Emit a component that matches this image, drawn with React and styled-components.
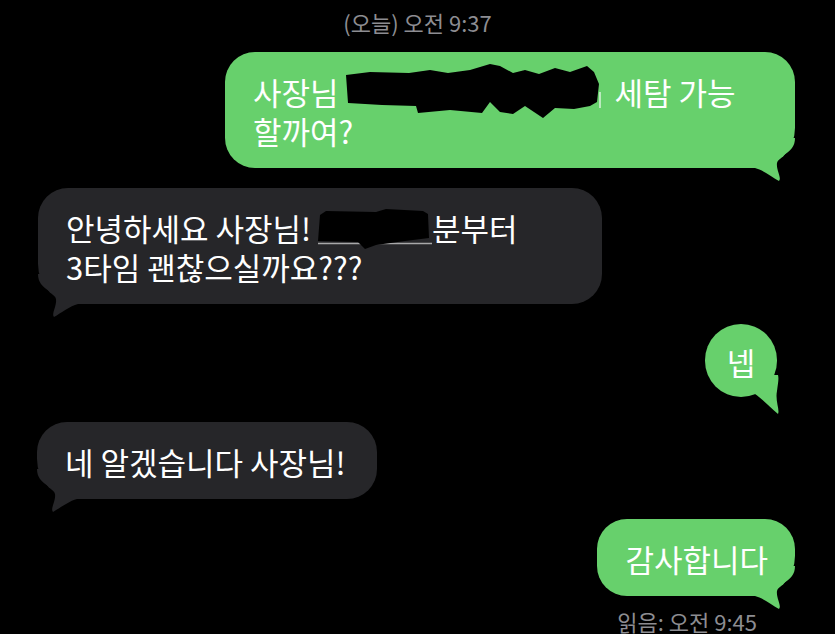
import React from "react";
import styled, { createGlobalStyle } from "styled-components";

const GREEN = "#67d06c";
const GRAY = "#262629";

const GlobalStyle = createGlobalStyle`
  html, body {
    margin: 0;
    padding: 0;
    background: #000;
  }
  body {
    width: 835px;
    height: 634px;
    overflow: hidden;
    font-family: "Noto Sans CJK KR", "Noto Sans", sans-serif;
  }
`;

const Thread = styled.div`
  display: flex;
  flex-direction: column;
  padding-top: 8px;
`;

const Stamp = styled.div`
  text-align: center;
  font-size: 22px;
  line-height: 28px;
  color: #8d8d92;
`;

const Row = styled.div`
  display: flex;
  justify-content: ${(p) => (p.$side === "right" ? "flex-end" : "flex-start")};
  padding: ${(p) => (p.$side === "right" ? `0 ${p.$inset}px 0 0` : `0 0 0 ${p.$inset}px`)};
  margin-top: ${(p) => p.$gap}px;
`;

const Bubble = styled.div`
  position: relative;
  box-sizing: border-box;
  width: ${(p) => (p.$w ? `${p.$w}px` : "auto")};
  padding: 20px 27px 18px 28px;
  border-radius: 30px;
  ${(p) => (p.$side === "right" ? "border-bottom-right-radius: 40px;" : "border-bottom-left-radius: 40px;")}
  background: ${(p) => (p.$side === "right" ? GREEN : GRAY)};
  color: #fff;
  font-size: 31px;
  line-height: 39px;
  white-space: nowrap;
`;

const Dot = styled(Bubble)`
  width: 72px;
  height: 73px;
  padding: 18px 0 16px;
  border-radius: 36px;
  text-align: center;
`;

const Text = styled.span`
  position: relative;
`;

const Tail = styled.svg`
  position: absolute;
  bottom: ${(p) => p.$drop}px;
  ${(p) => (p.$side === "right" ? `right: ${p.$edge}px;` : `left: ${p.$edge}px; transform: scaleX(-1);`)}
  fill: ${(p) => (p.$side === "right" ? GREEN : GRAY)};
  overflow: visible;
`;

const Redact = styled.span`
  display: inline-block;
  vertical-align: top;
  width: ${(p) => p.$w}px;
  height: 39px;

  svg {
    display: block;
    overflow: visible;
  }
`;

const Receipt = styled.div`
  text-align: right;
  padding-right: 78px;
  margin-top: 12px;
  font-size: 22px;
  line-height: 26px;
  color: #8d8d92;
`;

const TAIL = "M0 0 L0 30 C8 32 17 39 24 43 C27 40 21 32 22 25 C23 19 33 16 37 10 C39 7 40 4 40 0 Z";
const SMALL_TAIL = "M4 0 L4 19 C9 22 19 32 27 39 C29 35 24 26 26 16 C27 8 28 4 27 0 Z";

const BubbleTail = ({ side }) => (
  <Tail $side={side} $edge={0} $drop={-14} width="40" height="44" viewBox="0 0 40 44">
    <path d={TAIL} />
  </Tail>
);

const ScribbleLong = () => (
  <Redact $w={262}>
    <svg width="262" height="39" viewBox="0 0 262 39">
      <line x1="82" y1="37" x2="112" y2="37" stroke="rgba(255,255,255,0.75)" strokeWidth="1.5" />
      <line x1="254" y1="20" x2="254" y2="36" stroke="rgba(255,255,255,0.75)" strokeWidth="1.5" />
      <polygon
        fill="#000"
        points="0,3 2,31 36,33 70,34 72,41 104,38 136,41 144,30 154,40 167,42 179,34 197,46 209,36 228,37 244,34 251,30 253,12 248,0 241,-6 224,0 209,-4 193,2 179,-2 167,1 154,-6 144,-8 124,-2 102,1 84,-2 63,1 24,0"
      />
    </svg>
  </Redact>
);

const ScribbleShort = () => (
  <Redact $w={114}>
    <svg width="114" height="39" viewBox="0 0 114 39">
      <line x1="0" y1="35.5" x2="114" y2="35.5" stroke="rgba(255,255,255,0.6)" strokeWidth="1.5" />
      <polygon fill="#000" points="2,7 8,3 58,4 68,1 105,3 110,6 111,30 87,33 58,37 47,41 40,34 0,33" />
    </svg>
  </Redact>
);

export default function App() {
  return (
    <>
      <GlobalStyle />
      <Thread>
        <Stamp>(오늘) 오전 9:37</Stamp>

        <Row $side="right" $inset={40} $gap={16}>
          <Bubble $side="right" $w={570}>
            <BubbleTail side="right" />
            <Text>
              사장님 <ScribbleLong /> 세탐 가능
              <br />
              할까여?
            </Text>
          </Bubble>
        </Row>

        <Row $side="left" $inset={38} $gap={20}>
          <Bubble $side="left" $w={564}>
            <BubbleTail side="left" />
            <Text>
              안녕하세요 사장님! <ScribbleShort />분부터
              <br />
              3타임 괜찮으실까요???
            </Text>
          </Bubble>
        </Row>

        <Row $side="right" $inset={58} $gap={20}>
          <Dot $side="right">
            <Tail $side="right" $edge={-4} $drop={-18} width="30" height="40" viewBox="0 0 30 40">
              <path d={SMALL_TAIL} />
            </Tail>
            <Text>넵</Text>
          </Dot>
        </Row>

        <Row $side="left" $inset={37} $gap={25}>
          <Bubble $side="left" $w={340}>
            <BubbleTail side="left" />
            <Text>네 알겠습니다 사장님!</Text>
          </Bubble>
        </Row>

        <Row $side="right" $inset={40} $gap={20}>
          <Bubble $side="right">
            <BubbleTail side="right" />
            <Text>감사합니다</Text>
          </Bubble>
        </Row>

        <Receipt>읽음: 오전 9:45</Receipt>
      </Thread>
    </>
  );
}
